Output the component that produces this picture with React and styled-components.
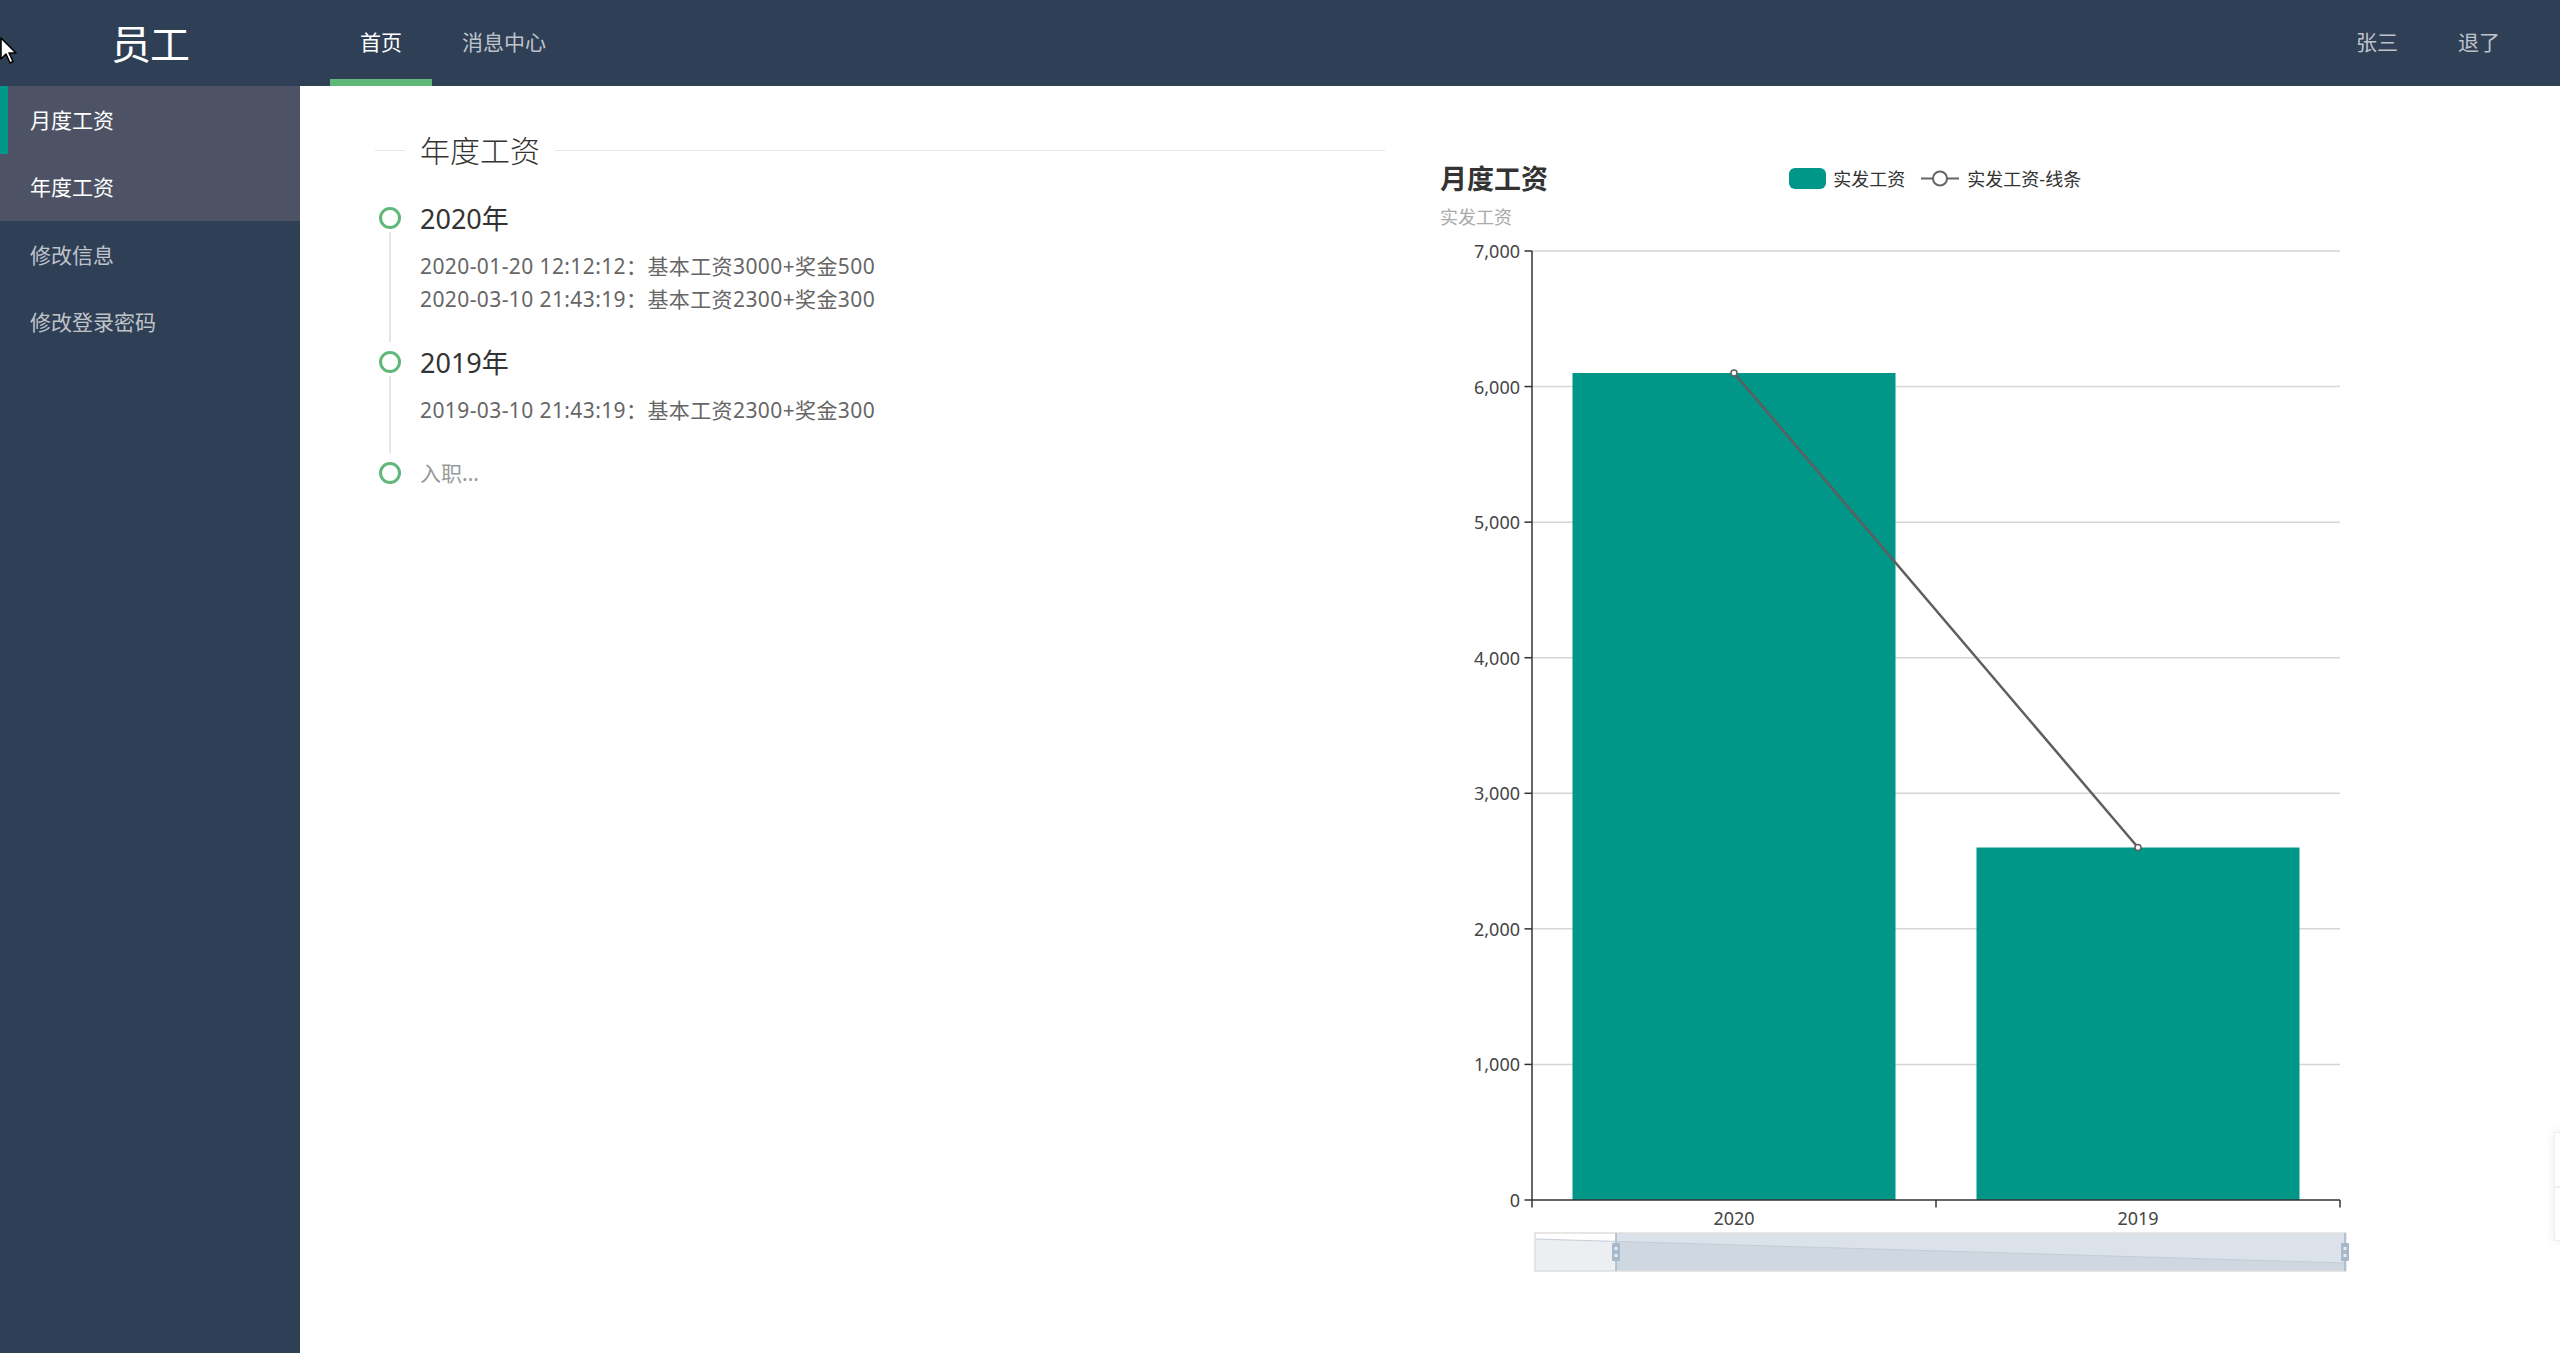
import React from "react";
import styled, { createGlobalStyle } from "styled-components";

const GlobalStyle = createGlobalStyle`
  html, body { margin: 0; padding: 0; }
  body {
    font-family: "Noto Sans", "Noto Sans CJK SC", sans-serif;
    background: #fff;
    color: #333;
  }
  * { box-sizing: border-box; }
`;

const Layout = styled.div`
  display: grid;
  grid-template-columns: 300px 1fr;
  grid-template-rows: 86px 1fr;
  min-height: 100vh;
`;

const Header = styled.header`
  grid-column: 1 / -1;
  display: flex;
  align-items: stretch;
  background: #2f4056;
`;

const Logo = styled.div`
  width: 300px;
  display: flex;
  align-items: center;
  justify-content: center;
  padding-bottom: 3px;
  color: #fff;
  font-size: 40px;
  letter-spacing: -1px;
`;

const NavList = styled.nav`
  display: flex;
  align-items: stretch;
  margin-left: ${(p) => (p.$right ? "auto" : "30px")};
  margin-right: ${(p) => (p.$right ? "30px" : "0")};
`;

const NavItem = styled.a`
  display: flex;
  align-items: center;
  padding: 0 30px 4px;
  font-size: 21px;
  color: ${(p) => (p.$active ? "#fff" : "rgba(255,255,255,0.7)")};
  box-shadow: ${(p) => (p.$active ? "inset 0 -7px 0 #5fb878" : "none")};
  text-decoration: none;
  cursor: pointer;
`;

const Sidebar = styled.aside`
  background: #2f4056;
  display: flex;
  flex-direction: column;
`;

const SideItem = styled.a`
  display: flex;
  align-items: center;
  height: 67.5px;
  padding: 0 0 2px 30px;
  font-size: 21px;
  color: ${(p) => (p.$highlight ? "#fff" : "rgba(255,255,255,0.7)")};
  background: ${(p) => (p.$highlight ? "#4d5365" : "transparent")};
  box-shadow: ${(p) => (p.$bar ? "inset 8px 0 0 #009688" : "none")};
  cursor: pointer;
`;

const Main = styled.main`
  display: grid;
  grid-template-columns: 1010px 1008px;
  column-gap: 47px;
  align-items: start;
  padding-left: 75px;
  background: #fff;
`;

const LeftColumn = styled.section`
  padding-top: 42px;
`;

const FieldTitle = styled.div`
  display: flex;
  align-items: center;
  height: 45px;
  &::before,
  &::after {
    content: "";
    height: 1px;
    background: #e6e6e6;
  }
  &::before {
    width: 30px;
  }
  &::after {
    flex: 1;
  }
`;

const Legend = styled.span`
  padding: 0 15px;
  font-size: 30px;
  font-weight: 300;
  color: #333;
  line-height: 45px;
`;

const Timeline = styled.ul`
  list-style: none;
  margin: 28.5px 0 0;
  padding: 0;
`;

const TimelineItem = styled.li`
  display: grid;
  grid-template-columns: 30px 1fr;
  column-gap: 15px;
`;

const Axis = styled.div`
  display: flex;
  flex-direction: column;
  align-items: center;
  padding-top: 5px;
`;

const Dot = styled.span`
  width: 22px;
  height: 22px;
  flex-shrink: 0;
  border: 3px solid #5fb878;
  border-radius: 50%;
  background: #fff;
`;

const Rail = styled.span`
  width: 2px;
  flex: 1;
  margin: 3px 0 4px;
  background: #e6e6e6;
`;

const ItemContent = styled.div`
  padding-bottom: ${(p) => (p.$last ? "0" : "30px")};
`;

const YearTitle = styled.h3`
  margin: 0 0 15px;
  font-size: 27px;
  font-weight: 400;
  line-height: 33px;
  color: #333;
`;

const Entry = styled.p`
  margin: 0;
  font-size: 21px;
  line-height: 33px;
  letter-spacing: 0.4px;
  color: #666;
`;

const PlainTitle = styled.div`
  font-size: 21px;
  line-height: 33px;
  color: #999;
`;

const ChartBox = styled.section`
  margin-top: 75px;
  width: 1008px;
  height: 1129px;
  display: flex;
  flex-direction: column;
`;

const ChartHeader = styled.div`
  display: grid;
  grid-template-columns: 1fr auto 1fr;
  align-items: start;
  height: 74px;
  padding-left: 8px;
`;

const TitleBlock = styled.div`
  display: flex;
  flex-direction: column;
`;

const ChartTitle = styled.div`
  font-size: 27px;
  font-weight: 700;
  line-height: 36px;
  color: #333;
`;

const ChartSub = styled.div`
  margin-top: 8px;
  font-size: 18px;
  line-height: 24px;
  color: #aaa;
`;

const LegendRow = styled.div`
  display: flex;
  align-items: center;
  height: 34px;
  gap: 16px;
  margin-right: 10px;
`;

const LegendItem = styled.div`
  display: flex;
  align-items: center;
  gap: ${(p) => p.$gap || 7}px;
  font-size: 18px;
  color: #333;
`;

const Swatch = styled.span`
  width: 37.5px;
  height: 21px;
  border-radius: 6px;
  background: #009688;
`;

const PlotSvg = styled.svg`
  display: block;
`;

const SideTools = styled.div`
  position: fixed;
  right: -44px;
  top: 1132px;
  display: flex;
  flex-direction: column;
  box-shadow: 0 0 10px rgba(0, 0, 0, 0.08);
`;

const ToolBtn = styled.div`
  width: 50px;
  height: 54.5px;
  background: #fff;
  border: 1px solid #eee;
`;

const Cursor = styled.svg`
  position: fixed;
  left: 0;
  top: 37px;
  pointer-events: none;
`;

const fmt = (n) => n.toLocaleString("en-US");

function Plot() {
  const left = 100;
  const right = 908;
  const top = 16;
  const bottom = 965;
  const step = (bottom - top) / 7;
  const yOf = (v) => bottom - (v / 1000) * step;
  const data = [
    { name: "2020", value: 6100, cx: 302 },
    { name: "2019", value: 2600, cx: 706 },
  ];
  const barW = 323;
  const ticks = [0, 1000, 2000, 3000, 4000, 5000, 6000, 7000];
  const txt = { fontFamily: '"Noto Sans", "Noto Sans CJK SC", sans-serif', fontSize: 18, fill: "#444" };

  const dzL = 103, dzR = 914, dzT = 998, dzB = 1036, hx = 184;
  const shadowY = (x) => 1004 + ((x - dzL) / (dzR - dzL)) * 24;

  return (
    <PlotSvg width="1008" height="1055" viewBox="0 0 1008 1055">
      {ticks.map((t) => (
        <g key={t}>
          {t > 0 && (
            <line x1={left} x2={right} y1={yOf(t)} y2={yOf(t)} stroke="#d6d6d6" strokeWidth="1.5" />
          )}
          <line x1={left - 7.5} x2={left} y1={yOf(t)} y2={yOf(t)} stroke="#333" strokeWidth="1.5" />
          <text x={88} y={yOf(t)} textAnchor="end" dominantBaseline="central" style={txt}>
            {fmt(t)}
          </text>
        </g>
      ))}
      {data.map((d) => (
        <rect key={d.name} x={d.cx - barW / 2} y={yOf(d.value)} width={barW} height={bottom - yOf(d.value)} fill="#009688" />
      ))}
      <line x1={left} x2={left} y1={top} y2={bottom} stroke="#333" strokeWidth="1.5" />
      <line x1={left} x2={right} y1={bottom} y2={bottom} stroke="#333" strokeWidth="1.5" />
      {[left, 504, right].map((x) => (
        <line key={x} x1={x} x2={x} y1={bottom} y2={bottom + 7.5} stroke="#333" strokeWidth="1.5" />
      ))}
      {data.map((d) => (
        <text key={d.name} x={d.cx} y={983} textAnchor="middle" dominantBaseline="central" style={txt}>
          {d.name}
        </text>
      ))}
      <polyline
        points={data.map((d) => `${d.cx},${yOf(d.value)}`).join(" ")}
        fill="none"
        stroke="#5e5e5e"
        strokeWidth="2.5"
      />
      {data.map((d) => (
        <circle key={d.name} cx={d.cx} cy={yOf(d.value)} r="3" fill="#fff" stroke="#5e5e5e" strokeWidth="1.5" />
      ))}

      {/* data zoom slider */}
      <rect x={dzL} y={dzT} width={dzR - dzL} height={dzB - dzT} fill="#fff" />
      <polygon
        points={`${dzL},${shadowY(dzL)} ${hx},${shadowY(hx)} ${hx},${dzB} ${dzL},${dzB}`}
        fill="#eceef1"
      />
      <rect x={hx} y={dzT} width={dzR - hx} height={dzB - dzT} fill="#dce2ea" />
      <polygon
        points={`${hx},${shadowY(hx)} ${dzR},${shadowY(dzR)} ${dzR},${dzB} ${hx},${dzB}`}
        fill="#cfd7e1"
      />
      <polyline
        points={`${dzL},${shadowY(dzL)} ${dzR},${shadowY(dzR)}`}
        fill="none"
        stroke="#c4ccd7"
        strokeWidth="1"
      />
      <rect x={dzL} y={dzT} width={dzR - dzL} height={dzB - dzT} fill="none" stroke="#dedede" strokeWidth="1.5" />
      {[hx, dzR - 1].map((x) => (
        <g key={x}>
          <line x1={x} x2={x} y1={dzT} y2={dzB} stroke="#a7b7cc" strokeWidth="1.5" />
          <rect x={x - 4} y={1008} width="8" height="18" rx="1" fill="#a7b7cc" />
          <rect x={x - 1.5} y={1012} width="3" height="3" fill="#e8edf3" />
          <rect x={x - 1.5} y={1019} width="3" height="3" fill="#e8edf3" />
        </g>
      ))}
    </PlotSvg>
  );
}

export default function App() {
  return (
    <>
      <GlobalStyle />
      <Layout>
        <Header>
          <Logo>员工</Logo>
          <NavList>
            <NavItem $active>首页</NavItem>
            <NavItem>消息中心</NavItem>
          </NavList>
          <NavList $right>
            <NavItem>张三</NavItem>
            <NavItem>退了</NavItem>
          </NavList>
        </Header>
        <Sidebar>
          <SideItem $highlight $bar>月度工资</SideItem>
          <SideItem $highlight>年度工资</SideItem>
          <SideItem>修改信息</SideItem>
          <SideItem>修改登录密码</SideItem>
        </Sidebar>
        <Main>
          <LeftColumn>
            <FieldTitle>
              <Legend>年度工资</Legend>
            </FieldTitle>
            <Timeline>
              <TimelineItem>
                <Axis>
                  <Dot />
                  <Rail />
                </Axis>
                <ItemContent>
                  <YearTitle>2020年</YearTitle>
                  <Entry>2020-01-20 12:12:12：基本工资3000+奖金500</Entry>
                  <Entry>2020-03-10 21:43:19：基本工资2300+奖金300</Entry>
                </ItemContent>
              </TimelineItem>
              <TimelineItem>
                <Axis>
                  <Dot />
                  <Rail />
                </Axis>
                <ItemContent>
                  <YearTitle>2019年</YearTitle>
                  <Entry>2019-03-10 21:43:19：基本工资2300+奖金300</Entry>
                </ItemContent>
              </TimelineItem>
              <TimelineItem>
                <Axis>
                  <Dot />
                </Axis>
                <ItemContent $last>
                  <PlainTitle>入职...</PlainTitle>
                </ItemContent>
              </TimelineItem>
            </Timeline>
          </LeftColumn>
          <ChartBox>
            <ChartHeader>
              <TitleBlock>
                <ChartTitle>月度工资</ChartTitle>
                <ChartSub>实发工资</ChartSub>
              </TitleBlock>
              <LegendRow>
                <LegendItem>
                  <Swatch />
                  实发工资
                </LegendItem>
                <LegendItem $gap={8}>
                  <svg width="38" height="21" viewBox="0 0 38 21">
                    <line x1="0" x2="38" y1="10.5" y2="10.5" stroke="#666" strokeWidth="2" />
                    <circle cx="19" cy="10.5" r="7" fill="#fff" stroke="#666" strokeWidth="2" />
                  </svg>
                  实发工资-线条
                </LegendItem>
              </LegendRow>
              <span />
            </ChartHeader>
            <Plot />
          </ChartBox>
        </Main>
      </Layout>
      <SideTools>
        <ToolBtn />
        <ToolBtn />
      </SideTools>
      <Cursor width="20" height="28" viewBox="0 0 20 28">
        <path d="M1 1 L1 22 L6 17 L10 26 L13 24.5 L9 16 L16 16 Z" fill="#fff" stroke="#000" strokeWidth="1.5" strokeLinejoin="round" />
      </Cursor>
    </>
  );
}
